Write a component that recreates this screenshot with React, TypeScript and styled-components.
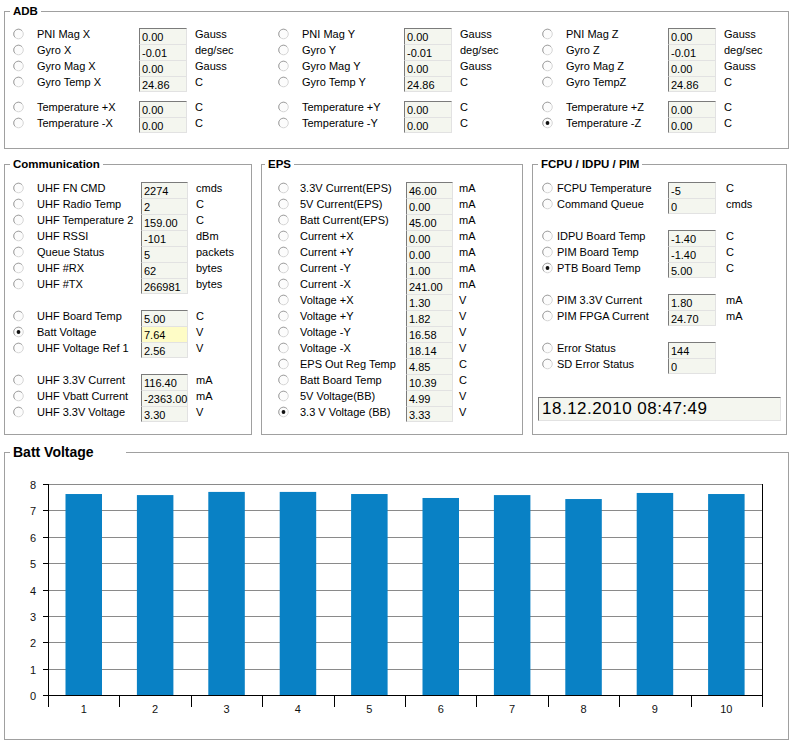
import React from "react";
import styled, { createGlobalStyle } from "styled-components";

const GlobalStyle = createGlobalStyle`
  html, body { margin: 0; padding: 0; background: #fff; }
  body {
    font-family: "Liberation Sans", Arial, sans-serif;
    font-size: 11px;
    color: #000;
  }
`;

type Item = { label: string; value: string; unit?: string; checked?: boolean; highlight?: boolean };
type Layout = { radio: number; label: number; box: number; unitPad: number };

const ADB_L: Layout = { radio: 24, label: 102, box: 48, unitPad: 8 };
const COMM_L: Layout = { radio: 24, label: 104, box: 47, unitPad: 8 };
const EPS_L: Layout = { radio: 22, label: 106, box: 47, unitPad: 6 };
const FCPU_L: Layout = { radio: 15, label: 111, box: 48, unitPad: 10 };

const Page = styled.div`
  width: 792px;
  height: 743px;
  box-sizing: border-box;
  padding: 5px 0 0 4px;
  overflow: hidden;
`;

const Group = styled.fieldset<{ $w: number; $mt?: number }>`
  margin: ${(p) => p.$mt ?? 0}px 0 0 0;
  padding: 0;
  border: 1px solid #a0a0a0;
  width: ${(p) => p.$w}px;
  box-sizing: border-box;
  min-inline-size: 0;
`;

const Legend = styled.legend<{ $ml: number; $big?: boolean }>`
  margin-left: ${(p) => p.$ml}px;
  padding: ${(p) => (p.$big ? "0 32px 0 3px" : "0 3px")};
  font-weight: bold;
  font-size: ${(p) => (p.$big ? 14 : 11.5)}px;
  line-height: ${(p) => (p.$big ? 17 : 13)}px;
`;

const AdbBody = styled.div`
  display: grid;
  grid-template-columns: 265px 264px auto;
  padding: 10px 0 15px 8px;
`;

const Column = styled.div`
  display: flex;
  flex-direction: column;
`;

const PanelBody = styled.div<{ $pl: number; $pr?: number; $pb?: number }>`
  display: flex;
  flex-direction: column;
  padding: 11px ${(p) => p.$pr ?? 0}px ${(p) => p.$pb ?? 12}px ${(p) => p.$pl}px;
`;

const RowBlock = styled.div<{ $mt: number; $pl?: number }>`
  display: flex;
  flex-direction: column;
  margin-top: ${(p) => p.$mt}px;
  padding-left: ${(p) => p.$pl ?? 0}px;
`;

const MiddleRow = styled.div`
  display: flex;
  gap: 9px;
  margin-top: 9px;
`;

const RowGrid = styled.div<{ $l: Layout }>`
  display: grid;
  grid-template-columns: ${(p) => `${p.$l.radio}px ${p.$l.label}px ${p.$l.box}px auto`};
  height: 16px;
  align-items: start;
`;

const RadioIcon = styled.svg`
  display: block;
  width: 12px;
  height: 12px;
`;

const Label = styled.span`
  line-height: 12px;
  white-space: nowrap;
`;

const Unit = styled.span<{ $pad: number }>`
  padding-left: ${(p) => p.$pad}px;
  line-height: 12px;
  white-space: nowrap;
`;

const ValueBox = styled.div<{ $first: boolean; $last: boolean; $hl?: boolean }>`
  box-sizing: border-box;
  height: 16px;
  border-left: 1px solid #7b7b7b;
  border-right: 1px solid #e2e2e2;
  border-top: 1px solid ${(p) => (p.$first ? "#7b7b7b" : "#e2e2e2")};
  border-bottom: ${(p) => (p.$last ? "1px solid #e2e2e2" : "0")};
  background: ${(p) => (p.$hl ? "#fefcc6" : "#f4f6ef")};
  padding: 1px 0 0 2px;
  line-height: 14px;
  white-space: nowrap;
`;

const DateBox = styled.div`
  box-sizing: border-box;
  width: 243px;
  height: 24px;
  margin-top: 23px;
  border-left: 1px solid #7b7b7b;
  border-top: 1px solid #7b7b7b;
  border-right: 1px solid #e2e2e2;
  border-bottom: 1px solid #e2e2e2;
  background: #f4f6ef;
  padding-left: 3px;
  font-size: 17px;
  letter-spacing: 0.5px;
  line-height: 22px;
  white-space: nowrap;
`;

const ChartSvg = styled.svg`
  display: block;
  width: 782px;
  height: 278px;
  font-family: "Liberation Sans", Arial, sans-serif;
  font-size: 11px;
`;

function Radio({ checked }: { checked?: boolean }) {
  return (
    <RadioIcon viewBox="0 0 12 12">
      <circle cx="5.5" cy="6" r="4.8" fill="#fcfcfc" stroke="#d6d6d6" strokeWidth="1" />
      <path d="M2.1 9.4 A4.8 4.8 0 0 1 8.9 2.6" fill="none" stroke="#a4a4a4" strokeWidth="1" />
      {checked && <circle cx="5.5" cy="6" r="1.9" fill="#111" />}
    </RadioIcon>
  );
}

function Row({ item, layout, first, last }: { item: Item; layout: Layout; first: boolean; last: boolean }) {
  return (
    <RowGrid $l={layout}>
      <Radio checked={item.checked} />
      <Label>{item.label}</Label>
      <ValueBox $first={first} $last={last} $hl={item.highlight}>
        {item.value}
      </ValueBox>
      <Unit $pad={layout.unitPad}>{item.unit ?? ""}</Unit>
    </RowGrid>
  );
}

function Blocks({ groups, layout, gap, pl }: { groups: Item[][]; layout: Layout; gap: number; pl?: number }) {
  return (
    <>
      {groups.map((g, gi) => (
        <RowBlock key={gi} $mt={gi === 0 ? 0 : gap} $pl={pl}>
          {g.map((it, i) => (
            <Row key={it.label} item={it} layout={layout} first={i === 0} last={i === g.length - 1} />
          ))}
        </RowBlock>
      ))}
    </>
  );
}

const adbCol = (axis: string, tempLabel: string, checkedMinus = false): Item[][] => [
  [
    { label: `PNI Mag ${axis}`, value: "0.00", unit: "Gauss" },
    { label: `Gyro ${axis}`, value: "-0.01", unit: "deg/sec" },
    { label: `Gyro Mag ${axis}`, value: "0.00", unit: "Gauss" },
    { label: tempLabel, value: "24.86", unit: "C" },
  ],
  [
    { label: `Temperature +${axis}`, value: "0.00", unit: "C" },
    { label: `Temperature -${axis}`, value: "0.00", unit: "C", checked: checkedMinus },
  ],
];

const comm: Item[][] = [
  [
    { label: "UHF FN CMD", value: "2274", unit: "cmds" },
    { label: "UHF Radio Temp", value: "2", unit: "C" },
    { label: "UHF Temperature 2", value: "159.00", unit: "C" },
    { label: "UHF RSSI", value: "-101", unit: "dBm" },
    { label: "Queue Status", value: "5", unit: "packets" },
    { label: "UHF #RX", value: "62", unit: "bytes" },
    { label: "UHF #TX", value: "266981", unit: "bytes" },
  ],
  [
    { label: "UHF Board Temp", value: "5.00", unit: "C" },
    { label: "Batt Voltage", value: "7.64", unit: "V", checked: true, highlight: true },
    { label: "UHF Voltage Ref 1", value: "2.56", unit: "V" },
  ],
  [
    { label: "UHF 3.3V Current", value: "116.40", unit: "mA" },
    { label: "UHF Vbatt Current", value: "-2363.00", unit: "mA" },
    { label: "UHF 3.3V Voltage", value: "3.30", unit: "V" },
  ],
];

const eps: Item[][] = [
  [
    { label: "3.3V Current(EPS)", value: "46.00", unit: "mA" },
    { label: "5V Current(EPS)", value: "0.00", unit: "mA" },
    { label: "Batt Current(EPS)", value: "45.00", unit: "mA" },
    { label: "Current +X", value: "0.00", unit: "mA" },
    { label: "Current +Y", value: "0.00", unit: "mA" },
    { label: "Current -Y", value: "1.00", unit: "mA" },
    { label: "Current -X", value: "241.00", unit: "mA" },
    { label: "Voltage +X", value: "1.30", unit: "V" },
    { label: "Voltage +Y", value: "1.82", unit: "V" },
    { label: "Voltage -Y", value: "16.58", unit: "V" },
    { label: "Voltage -X", value: "18.14", unit: "V" },
    { label: "EPS Out Reg Temp", value: "4.85", unit: "C" },
    { label: "Batt Board Temp", value: "10.39", unit: "C" },
    { label: "5V Voltage(BB)", value: "4.99", unit: "V" },
    { label: "3.3 V Voltage (BB)", value: "3.33", unit: "V", checked: true },
  ],
];

const fcpu: Item[][] = [
  [
    { label: "FCPU Temperature", value: "-5", unit: "C" },
    { label: "Command Queue", value: "0", unit: "cmds" },
  ],
  [
    { label: "IDPU Board Temp", value: "-1.40", unit: "C" },
    { label: "PIM Board Temp", value: "-1.40", unit: "C" },
    { label: "PTB Board Temp", value: "5.00", unit: "C", checked: true },
  ],
  [
    { label: "PIM 3.3V Current", value: "1.80", unit: "mA" },
    { label: "PIM FPGA Current", value: "24.70", unit: "mA" },
  ],
  [
    { label: "Error Status", value: "144" },
    { label: "SD Error Status", value: "0" },
  ],
];

const battValues = [7.62, 7.58, 7.7, 7.7, 7.62, 7.47, 7.58, 7.43, 7.66, 7.62];

function BattChart() {
  const L = 43, R = 757, T = 23, B = 234, TB = 246;
  const u = (B - T) / 8;
  const cw = (R - L) / 10;
  const py = (v: number) => Math.round(B - v * u) + 0.5;
  const levels = [0, 1, 2, 3, 4, 5, 6, 7, 8];
  return (
    <ChartSvg viewBox="0 0 782 278">
      {levels.slice(1).map((v) => (
        <line key={`g${v}`} x1={L} x2={R} y1={py(v)} y2={py(v)} stroke="#8a8a8a" strokeWidth="1" />
      ))}
      {battValues.map((v, i) => {
        const x = L + i * cw + 17.5;
        const top = B - v * u;
        return <rect key={`b${i}`} x={x} y={top} width={36.5} height={B - top + 0.5} fill="#0981c5" />;
      })}
      <line x1={L + 0.5} x2={L + 0.5} y1={T} y2={TB} stroke="#000" />
      <line x1={R + 0.5} x2={R + 0.5} y1={T} y2={TB} stroke="#000" />
      <line x1={L} x2={R + 1} y1={B + 0.5} y2={B + 0.5} stroke="#000" />
      {levels.map((v) => (
        <g key={`t${v}`}>
          <line x1={38} x2={L} y1={py(v)} y2={py(v)} stroke="#000" />
          <text x={31} y={py(v) + 4} textAnchor="end" fill="#111">
            {v}
          </text>
        </g>
      ))}
      {Array.from({ length: 9 }, (_, k) => {
        const x = Math.round(L + (k + 1) * cw) + 0.5;
        return <line key={`x${k}`} x1={x} x2={x} y1={B} y2={TB} stroke="#000" />;
      })}
      {battValues.map((_, i) => (
        <text key={`l${i}`} x={L + i * cw + cw / 2} y={252} textAnchor="middle" fill="#111">
          {i + 1}
        </text>
      ))}
    </ChartSvg>
  );
}

export default function App() {
  return (
    <>
      <GlobalStyle />
      <Page>
        <Group $w={785}>
          <Legend $ml={5}>ADB</Legend>
          <AdbBody>
            <Column>
              <Blocks groups={adbCol("X", "Gyro Temp X")} layout={ADB_L} gap={9} />
            </Column>
            <Column>
              <Blocks groups={adbCol("Y", "Gyro Temp Y")} layout={ADB_L} gap={9} />
            </Column>
            <Column>
              <Blocks groups={adbCol("Z", "Gyro TempZ", true)} layout={ADB_L} gap={9} />
            </Column>
          </AdbBody>
        </Group>

        <MiddleRow>
          <Group $w={248}>
            <Legend $ml={5}>Communication</Legend>
            <PanelBody $pl={8}>
              <Blocks groups={comm} layout={COMM_L} gap={16} />
            </PanelBody>
          </Group>
          <Group $w={262}>
            <Legend $ml={3}>EPS</Legend>
            <PanelBody $pl={16}>
              <Blocks groups={eps} layout={EPS_L} gap={16} />
            </PanelBody>
          </Group>
          <Group $w={255}>
            <Legend $ml={5}>FCPU / IDPU / PIM</Legend>
            <PanelBody $pl={5} $pr={5} $pb={13}>
              <Blocks groups={fcpu} layout={FCPU_L} gap={16} pl={4} />
              <DateBox>18.12.2010 08:47:49</DateBox>
            </PanelBody>
          </Group>
        </MiddleRow>

        <Group $w={785} $mt={9}>
          <Legend $ml={5} $big>
            Batt Voltage
          </Legend>
          <BattChart />
        </Group>
      </Page>
    </>
  );
}
